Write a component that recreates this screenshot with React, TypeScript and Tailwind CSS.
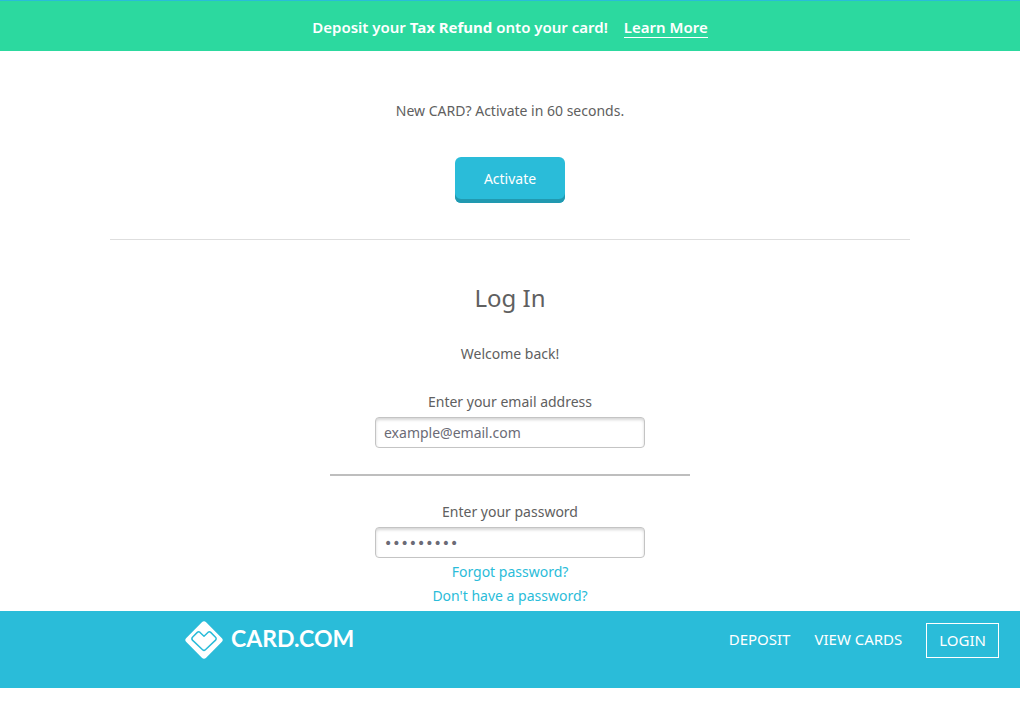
import { useState } from 'react';

const fieldClass =
  'h-[31px] w-[270px] rounded border border-[#c4c4c4] bg-white px-2 text-sm text-[#606066] shadow-[inset_0_2px_3px_rgba(0,0,0,0.16)] outline-none';

function Banner() {
  return (
    <aside className="border-t border-[#2abcd9] bg-[#2cd99f] px-4 pt-[14px] pb-3 text-center text-[15px] leading-6 font-semibold text-white">
      Deposit your <strong className="font-bold">Tax Refund</strong> onto your card!
      <a href="#learn" className="ml-4 inline-block border-b border-white leading-5">
        Learn More
      </a>
    </aside>
  );
}

function Logo() {
  return (
    <a href="#home" className="flex items-center gap-2 text-white">
      <svg viewBox="0 0 38 38" className="size-[38px]" aria-hidden="true">
        <rect x="5" y="5" width="28" height="28" rx="3" fill="currentColor" transform="rotate(45 19 19)" />
        <path
          d="M19 15.2 L14.8 11.2 Q13.5 10.2 12.3 11.4 L7.7 16 Q6 17.7 7.7 19.4 L17.6 28.7 Q19 30 20.4 28.7 L30.3 19.4 Q32 17.7 30.3 16 L25.7 11.4 Q24.5 10.2 23.2 11.2 Z"
          fill="none"
          stroke="#2abcd9"
          strokeWidth="1.5"
          strokeLinejoin="round"
        />
      </svg>
      <span className="pb-1 font-[Lato,sans-serif] text-[23px] leading-8 font-bold">CARD.COM</span>
    </a>
  );
}

function SiteBar() {
  return (
    <header className="flex items-start justify-between bg-[#2abcd9] pt-[10px] pr-[21px] pb-[29px] pl-[185px]">
      <Logo />
      <nav className="flex items-start gap-6 pt-[2px] text-[15px] leading-[33px] text-white">
        <a href="#deposit">DEPOSIT</a>
        <a href="#cards">VIEW CARDS</a>
        <a href="#login" className="border border-white px-3">
          LOGIN
        </a>
      </nav>
    </header>
  );
}

export default function App() {
  const [email, setEmail] = useState('');
  const [password, setPassword] = useState('');
  return (
    <div className="bg-white font-['Noto_Sans','Open_Sans',sans-serif] text-sm leading-6 text-[#606060]">
      <Banner />
      <main>
        <section className="mx-[110px] flex flex-col items-center border-b border-[#dedede] pt-12 pb-9">
          <p>New CARD? Activate in 60 seconds.</p>
          <button
            type="button"
            className="mt-[34px] h-[46px] w-[110px] rounded-md bg-[#2abcd9] pb-[2px] text-white shadow-[inset_0_-4px_0_#2199b0]"
          >
            Activate
          </button>
        </section>
        <form className="flex flex-col items-center pt-[42px]" onSubmit={(e) => e.preventDefault()}>
          <h1 className="text-2xl leading-8">Log In</h1>
          <p className="mt-7">Welcome back!</p>
          <label htmlFor="email" className="mt-6">
            Enter your email address
          </label>
          <input
            id="email"
            type="email"
            placeholder="example@email.com"
            value={email}
            onChange={(e) => setEmail(e.target.value)}
            className={`${fieldClass} mt-[3px] placeholder:text-[#6b6b76]`}
          />
          <hr className="mt-[26px] w-[360px] border-t-2 border-[#bebebe]" />
          <label htmlFor="password" className="mt-6">
            Enter your password
          </label>
          <input
            id="password"
            type="password"
            placeholder="•••••••••"
            value={password}
            onChange={(e) => setPassword(e.target.value)}
            className={`${fieldClass} mt-[3px] placeholder:font-['DejaVu_Sans',sans-serif] placeholder:text-[#6b6b76]`}
          />
          <a href="#forgot" className="mt-[2px] text-[#2abcd9]">
            Forgot password?
          </a>
          <a href="#new" className="pb-[3px] text-[#2abcd9]">
            Don't have a password?
          </a>
        </form>
      </main>
      <SiteBar />
    </div>
  );
}
